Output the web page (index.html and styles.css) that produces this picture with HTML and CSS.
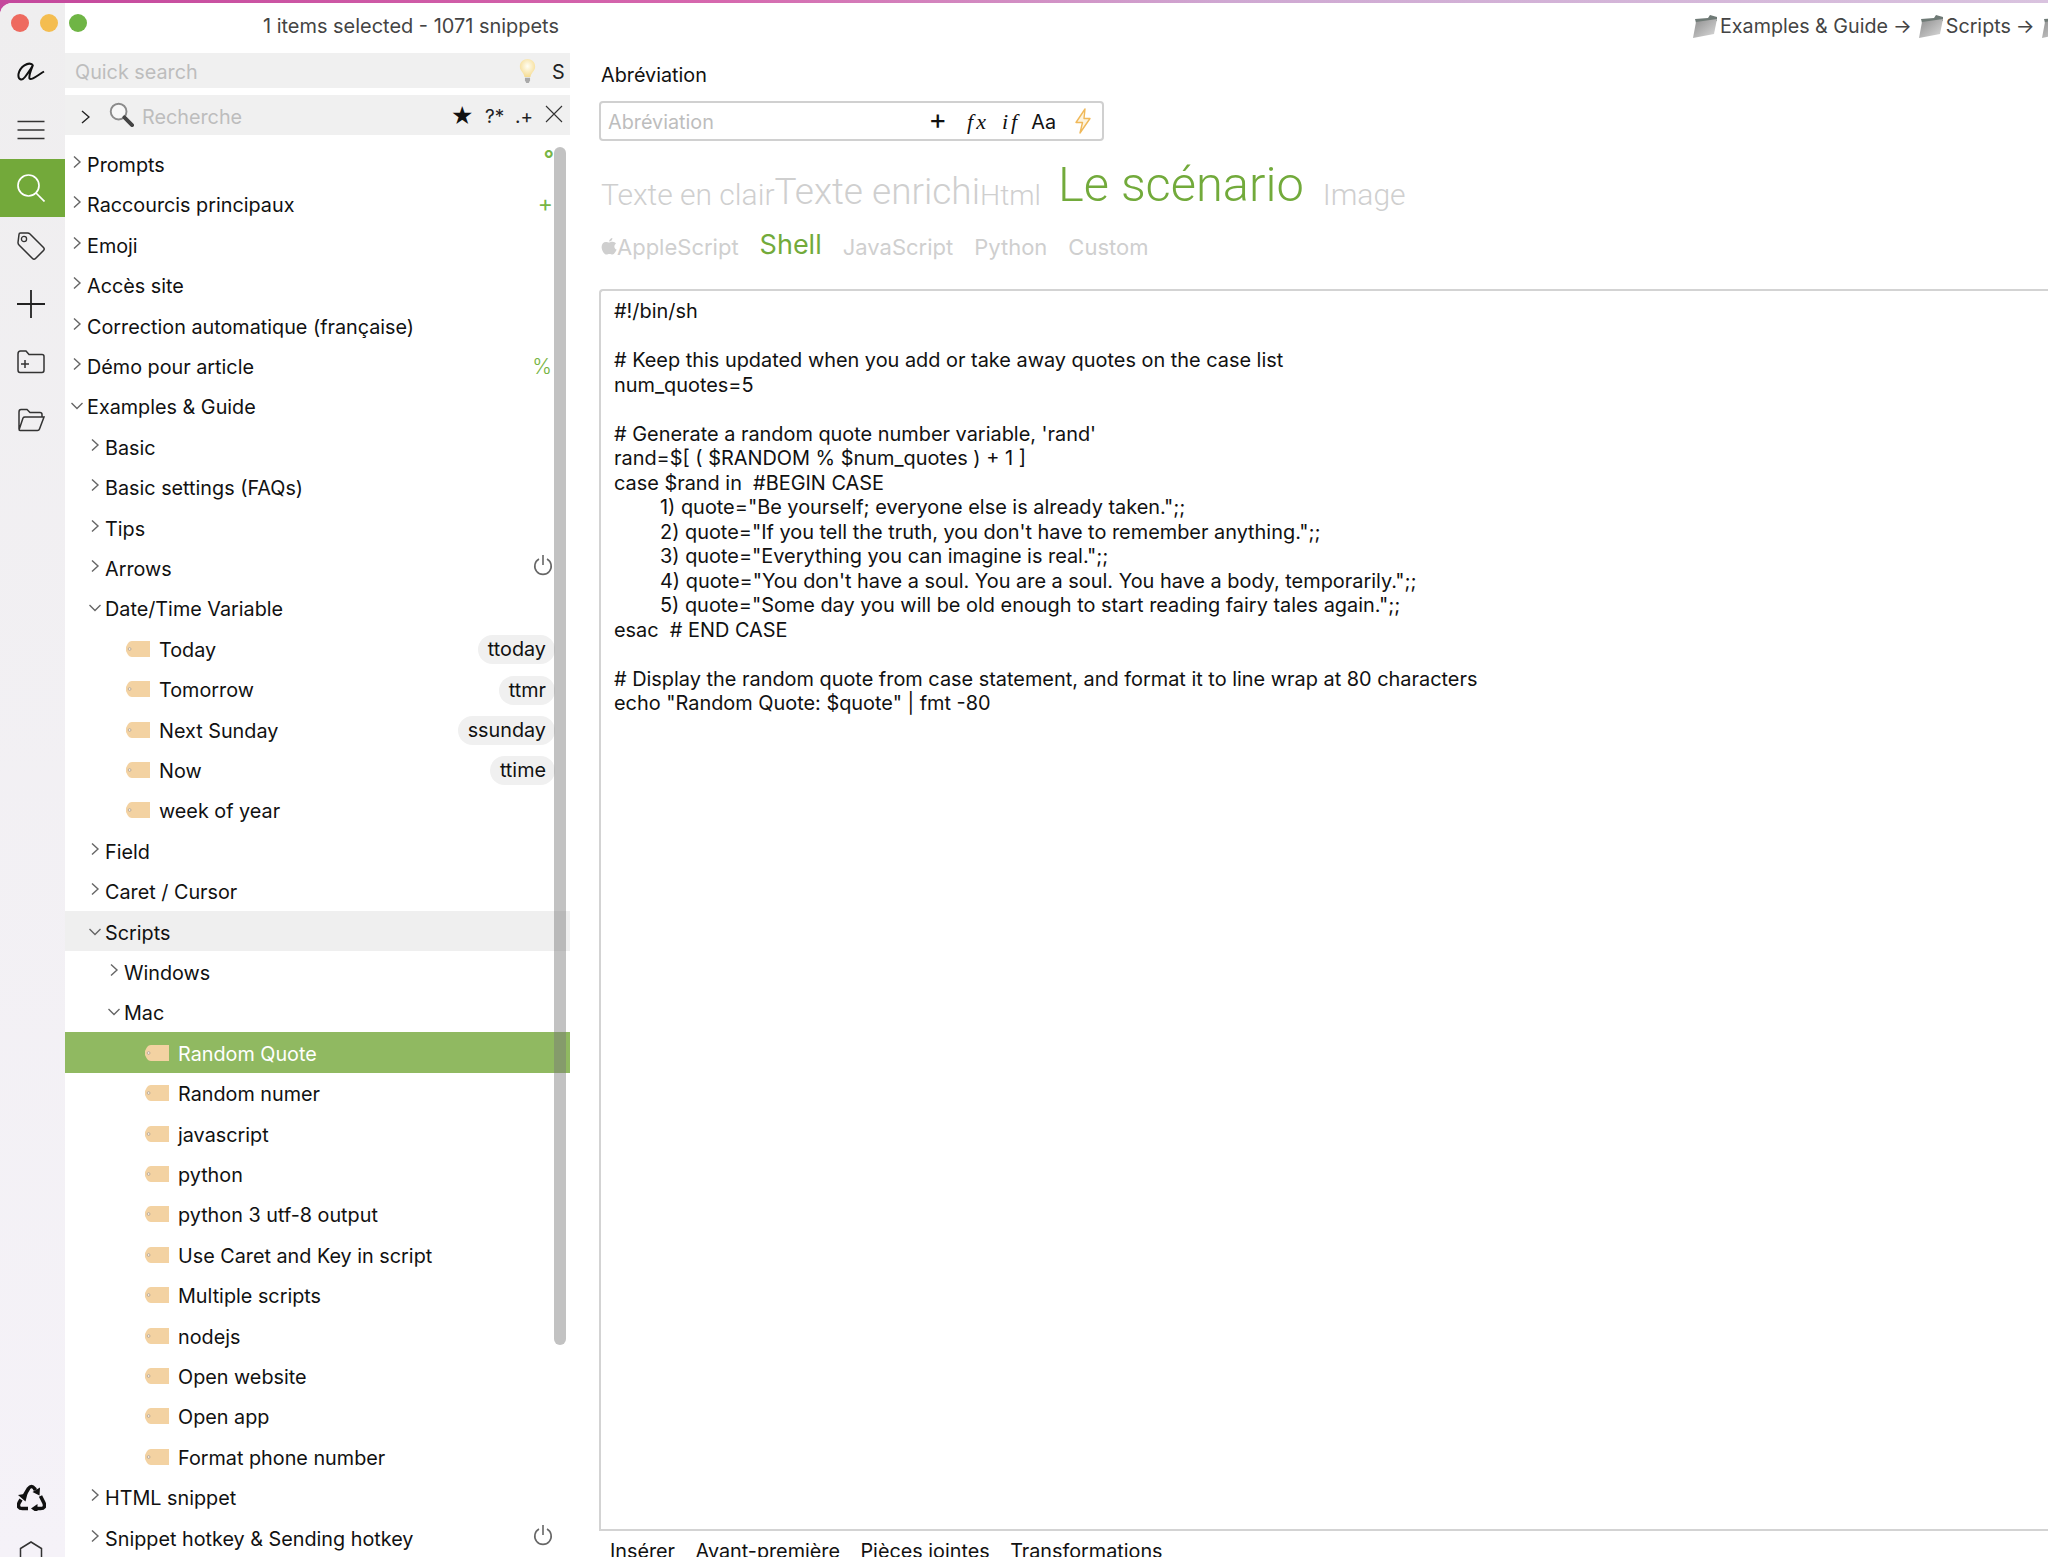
FILE: index.html
```html
<!DOCTYPE html>
<html lang="fr">
<head>
<meta charset="utf-8">
<title>aText</title>
<link rel="stylesheet" href="styles.css">
</head>
<body>
<svg class="defs" width="0" height="0">
  <symbol id="chev-r" viewBox="0 0 12 12"><path d="M3 0.5 L9 6 L3 11.5" fill="none" stroke="#666" stroke-width="1.4"/></symbol>
  <symbol id="chev-d" viewBox="0 0 12 12"><path d="M0.5 3 L6 8.5 L11.5 3" fill="none" stroke="#666" stroke-width="1.4"/></symbol>
  <symbol id="tag" viewBox="0 0 24 16"><path d="M6 0 H24 V16 H6 Q3 16 1.5 13 L0 10 V6 L1.5 3 Q3 0 6 0Z" fill="#f3d2a2"/><circle cx="3.6" cy="8" r="1.4" fill="#f8efe2" stroke="#a89a8a" stroke-width=".7"/></symbol>
  <symbol id="power" viewBox="0 0 20 22"><path d="M6 5 A8.2 8.2 0 1 0 14 5" fill="none" stroke="#666" stroke-width="1.6"/><path d="M10 1 V11" fill="none" stroke="#666" stroke-width="1.6"/></symbol>
  <symbol id="crumb" viewBox="0 0 24 23"><defs><linearGradient id="cg" x1="0" y1="0" x2="1" y2="1"><stop offset="0" stop-color="#8d8d8d"/><stop offset="1" stop-color="#dcdcdc"/></linearGradient></defs><path d="M2 4 L15 3 L17 0 L24 2 L24 6 L3 8 Z" fill="#6f7a76"/><path d="M3 7 L24 4 L21 19 L0 23 Z" fill="url(#cg)"/></symbol>
</svg>
<div class="window">
  <aside class="rail">
    <div class="lights">
      <span class="light red"></span>
      <span class="light amber"></span>
      <span class="light green"></span>
    </div>
    <div class="rail-slot">
      <svg class="ic" viewBox="0 0 28 20"><path d="M16 3 C11 -1 3 5 1.5 12 C0.8 18 5 19 8 15 C11 11 14.5 6 16 3 C14 8 11.5 14 12.5 16.5 C14 19 21 13 27 9.5" fill="none" stroke="#111" stroke-width="2"/></svg>
    </div>
    <div class="rail-slot">
      <svg class="ic" viewBox="0 0 28 20"><path d="M0.5 1.5 H27.5 M0.5 10 H27.5 M0.5 18.5 H27.5" stroke="#333" stroke-width="1.6"/></svg>
    </div>
    <div class="rail-slot active">
      <svg class="ic-lg" viewBox="0 0 28 28"><circle cx="11.5" cy="11.5" r="10.5" fill="none" stroke="#fff" stroke-width="1.7"/><path d="M19 19 L27.5 27.5" stroke="#fff" stroke-width="1.7"/></svg>
    </div>
    <div class="rail-slot">
      <svg class="ic-lg" viewBox="0 0 28 28"><path d="M2 2.5 Q2 1 3.5 1 H10.5 Q12 1 13 2 L26.5 15.5 Q28 17 26.5 18.5 L18.5 26.5 Q17 28 15.5 26.5 L2 13 Q1 12 1 10.5 Z" fill="none" stroke="#333" stroke-width="1.5"/><circle cx="7" cy="7" r="2.6" fill="none" stroke="#333" stroke-width="1.3"/></svg>
    </div>
    <div class="rail-slot">
      <svg class="ic-lg" viewBox="0 0 28 28"><path d="M14 0 V28 M0 14 H28" stroke="#222" stroke-width="1.8"/></svg>
    </div>
    <div class="rail-slot">
      <svg class="ic-lg" viewBox="0 0 28 24"><path d="M1 4 Q1 1 3.5 1 H9 L12 4.5 H25 Q27 4.5 27 6.5 V20 Q27 22.5 25 22.5 H3 Q1 22.5 1 20 Z" fill="none" stroke="#333" stroke-width="1.5"/><path d="M8 10 V18 M4 14 H12" stroke="#333" stroke-width="1.5"/></svg>
    </div>
    <div class="rail-slot">
      <svg class="ic-lg" viewBox="0 0 28 24"><path d="M2 21 V4 Q2 1.5 4 1.5 H10 L13 4.5 H23 Q25 4.5 25 6.5 V9 M2 22 L6 10 Q6.5 9 8 9 H27 L22.5 21 Q22 22.5 20.5 22.5 H3 Q2 22.5 2 21" fill="none" stroke="#333" stroke-width="1.5"/></svg>
    </div>
    <div class="rail-bottom">
      <div class="rail-slot">
        <svg class="ic-recycle" viewBox="0 0 29 27"><path d="M6.5 13 L11.5 4.5 Q14.5 0.5 17.5 4.5 L18.5 6.2 M23.5 12 L27 19 Q29 24.5 23.5 24.5 L20 24.5 M11 24.5 L5.5 24.5 Q0 24.5 2 19 L4 15.5" fill="none" stroke="#111" stroke-width="3.6" stroke-linejoin="round"/><path d="M15.5 8 L22.5 11.5 L23 3.5Z M20.5 20 L14 24.5 L20.5 29Z M1 11 L8.5 17.5 L10.5 9.5Z" fill="#111"/></svg>
      </div>
      <div class="rail-slot">
        <svg class="ic-hex" viewBox="0 0 24 28"><path d="M12 1 L22.5 7.5 V20.5 L12 27 L1.5 20.5 V7.5 Z" fill="none" stroke="#333" stroke-width="1.5"/></svg>
      </div>
    </div>
  </aside>

  <div class="main">
    <header class="titlebar">
      <div class="title">1 items selected - 1071 snippets</div>
      <div class="crumbs">
        <svg class="crumb-ic"><use href="#crumb"/></svg><span>Examples &amp; Guide</span><span class="arrow">→</span>
        <svg class="crumb-ic"><use href="#crumb"/></svg><span>Scripts</span><span class="arrow">→</span>
        <svg class="crumb-ic"><use href="#crumb"/></svg>
      </div>
    </header>

    <div class="content">
      <section class="sidebar">
        <div class="quick">
          <span class="quick-ph">Quick search</span>
          <svg class="bulb" viewBox="0 0 20 30"><defs><radialGradient id="bg" cx=".5" cy=".4" r=".6"><stop offset="0" stop-color="#fffef4"/><stop offset="1" stop-color="#f6dc92"/></radialGradient></defs><path d="M10 1 C4 1 1 5.5 1 10 C1 15 6 17 6.5 22 H13.5 C14 17 19 15 19 10 C19 5.5 16 1 10 1Z" fill="url(#bg)"/><path d="M7 23 H13 V26 L11.5 29 H8.5 L7 26Z" fill="#a9a9a9"/></svg>
          <span class="quick-s">S</span>
        </div>
        <div class="finder">
          <svg class="finder-chev" viewBox="0 0 9 14"><path d="M1 1 L8 7 L1 13" fill="none" stroke="#222" stroke-width="1.4"/></svg>
          <svg class="finder-mag" viewBox="0 0 26 26"><circle cx="10" cy="10" r="8.2" fill="#f7f7f7" stroke="#8b8b8b" stroke-width="2"/><path d="M16 16 L24 24" stroke="#444" stroke-width="4" stroke-linecap="round"/></svg>
          <span class="finder-ph">Recherche</span>
          <span class="finder-star">★</span>
          <span class="finder-op">?*</span>
          <span class="finder-op">.+</span>
          <svg class="finder-x" viewBox="0 0 18 18"><path d="M1 1 L17 17 M17 1 L1 17" stroke="#333" stroke-width="1.1"/></svg>
        </div>

        <div class="tree">
          <div class="thumb"></div>
          <div class="row l0"><svg class="chev r"><use href="#chev-r"/></svg><span class="label">Prompts</span><span class="mark degree">°</span></div>
          <div class="row l0"><svg class="chev r"><use href="#chev-r"/></svg><span class="label">Raccourcis principaux</span><span class="mark plus">+</span></div>
          <div class="row l0"><svg class="chev r"><use href="#chev-r"/></svg><span class="label">Emoji</span></div>
          <div class="row l0"><svg class="chev r"><use href="#chev-r"/></svg><span class="label">Accès site</span></div>
          <div class="row l0"><svg class="chev r"><use href="#chev-r"/></svg><span class="label">Correction automatique (française)</span></div>
          <div class="row l0"><svg class="chev r"><use href="#chev-r"/></svg><span class="label">Démo pour article</span><span class="mark percent">%</span></div>
          <div class="row l0"><svg class="chev d"><use href="#chev-d"/></svg><span class="label">Examples &amp; Guide</span></div>
          <div class="row l1"><svg class="chev r"><use href="#chev-r"/></svg><span class="label">Basic</span></div>
          <div class="row l1"><svg class="chev r"><use href="#chev-r"/></svg><span class="label">Basic settings (FAQs)</span></div>
          <div class="row l1"><svg class="chev r"><use href="#chev-r"/></svg><span class="label">Tips</span></div>
          <div class="row l1"><svg class="chev r"><use href="#chev-r"/></svg><span class="label">Arrows</span><svg class="power"><use href="#power"/></svg></div>
          <div class="row l1"><svg class="chev d"><use href="#chev-d"/></svg><span class="label">Date/Time Variable</span></div>
          <div class="row leaf1"><svg class="tag"><use href="#tag"/></svg><span class="label">Today</span><span class="pill">ttoday</span></div>
          <div class="row leaf1"><svg class="tag"><use href="#tag"/></svg><span class="label">Tomorrow</span><span class="pill">ttmr</span></div>
          <div class="row leaf1"><svg class="tag"><use href="#tag"/></svg><span class="label">Next Sunday</span><span class="pill">ssunday</span></div>
          <div class="row leaf1"><svg class="tag"><use href="#tag"/></svg><span class="label">Now</span><span class="pill">ttime</span></div>
          <div class="row leaf1"><svg class="tag"><use href="#tag"/></svg><span class="label">week of year</span></div>
          <div class="row l1"><svg class="chev r"><use href="#chev-r"/></svg><span class="label">Field</span></div>
          <div class="row l1"><svg class="chev r"><use href="#chev-r"/></svg><span class="label">Caret / Cursor</span></div>
          <div class="row l1 parent"><svg class="chev d"><use href="#chev-d"/></svg><span class="label">Scripts</span></div>
          <div class="row l2"><svg class="chev r"><use href="#chev-r"/></svg><span class="label">Windows</span></div>
          <div class="row l2"><svg class="chev d"><use href="#chev-d"/></svg><span class="label">Mac</span></div>
          <div class="row leaf2 selected"><svg class="tag"><use href="#tag"/></svg><span class="label">Random Quote</span></div>
          <div class="row leaf2"><svg class="tag"><use href="#tag"/></svg><span class="label">Random numer</span></div>
          <div class="row leaf2"><svg class="tag"><use href="#tag"/></svg><span class="label">javascript</span></div>
          <div class="row leaf2"><svg class="tag"><use href="#tag"/></svg><span class="label">python</span></div>
          <div class="row leaf2"><svg class="tag"><use href="#tag"/></svg><span class="label">python 3 utf-8 output</span></div>
          <div class="row leaf2"><svg class="tag"><use href="#tag"/></svg><span class="label">Use Caret and Key in script</span></div>
          <div class="row leaf2"><svg class="tag"><use href="#tag"/></svg><span class="label">Multiple scripts</span></div>
          <div class="row leaf2"><svg class="tag"><use href="#tag"/></svg><span class="label">nodejs</span></div>
          <div class="row leaf2"><svg class="tag"><use href="#tag"/></svg><span class="label">Open website</span></div>
          <div class="row leaf2"><svg class="tag"><use href="#tag"/></svg><span class="label">Open app</span></div>
          <div class="row leaf2"><svg class="tag"><use href="#tag"/></svg><span class="label">Format phone number</span></div>
          <div class="row l1"><svg class="chev r"><use href="#chev-r"/></svg><span class="label">HTML snippet</span></div>
          <div class="row l1"><svg class="chev r"><use href="#chev-r"/></svg><span class="label">Snippet hotkey &amp; Sending hotkey</span><svg class="power"><use href="#power"/></svg></div>
        </div>
      </section>

      <section class="detail">
        <div class="abbr-label">Abréviation</div>
        <div class="abbr-field">
          <span class="abbr-ph">Abréviation</span>
          <span class="abbr-plus">+</span>
          <span class="abbr-fx">fx</span>
          <span class="abbr-if">if</span>
          <span class="abbr-aa">Aa</span>
          <svg class="bolt" viewBox="0 0 18 26"><path d="M11 1 L2 14.5 H8.5 L6 25 L16 10.5 H10 Z" fill="#fdf3dd" stroke="#f0b95a" stroke-width="1.4" stroke-linejoin="round"/></svg>
        </div>
        <div class="kinds">
          <span class="kind k-plain">Texte en clair</span>
          <span class="kind k-rich">Texte enrichi</span>
          <span class="kind k-html">Html</span>
          <span class="kind k-script">Le scénario</span>
          <span class="kind k-image">Image</span>
        </div>
        <div class="langs">
          <span class="lang lang-apple"><svg class="apple" viewBox="0 0 16 20"><path d="M11.4 1 C11.5 2.8 10 4.6 8.2 4.5 C8 2.8 9.7 1.1 11.4 1Z M8.3 5.5 C9.2 5.5 10.2 4.8 11.6 4.8 C13 4.8 14.2 5.5 15 6.7 C12.6 8 13 11.6 15.6 12.6 C15 14.2 13.3 17.6 11.5 17.6 C10.4 17.6 9.8 16.9 8.5 16.9 C7.2 16.9 6.5 17.6 5.5 17.6 C3.5 17.6 0.6 13.6 0.6 10 C0.6 6.8 2.7 4.9 4.8 4.9 C6.2 4.9 7.4 5.5 8.3 5.5Z" fill="#cfcfcf"/></svg>AppleScript</span>
          <span class="lang lang-on">Shell</span>
          <span class="lang">JavaScript</span>
          <span class="lang">Python</span>
          <span class="lang">Custom</span>
        </div>
        <pre class="editor">#!/bin/sh

# Keep this updated when you add or take away quotes on the case list
num_quotes=5

# Generate a random quote number variable, 'rand'
rand=$[ ( $RANDOM % $num_quotes ) + 1 ]
case $rand in  #BEGIN CASE
&#9;1) quote="Be yourself; everyone else is already taken.";;
&#9;2) quote="If you tell the truth, you don't have to remember anything.";;
&#9;3) quote="Everything you can imagine is real.";;
&#9;4) quote="You don't have a soul. You are a soul. You have a body, temporarily.";;
&#9;5) quote="Some day you will be old enough to start reading fairy tales again.";;
esac  # END CASE

# Display the random quote from case statement, and format it to line wrap at 80 characters
echo "Random Quote: $quote" | fmt -80</pre>
        <nav class="bottom-tabs">
          <span>Insérer</span>
          <span>Avant-première</span>
          <span>Pièces jointes</span>
          <span>Transformations</span>
        </nav>
      </section>
    </div>
  </div>
</div>
</body>
</html>
```
FILE: styles.css
```css
* { box-sizing: border-box; }
html, body { margin: 0; height: 100%; }
body {
  height: 1557px;
  overflow: hidden;
  padding-top: 3px;
  background: linear-gradient(90deg, #c4489c 0%, #d668ae 35%, #cfa8d2 60%, #d9c3df 100%);
  font-family: Inter, "Liberation Sans", sans-serif;
  font-size: 19.8px;
  color: #111;
}
.defs { position: absolute; }

.window {
  display: flex;
  height: 1554px;
  background: #fff;
  border-top-left-radius: 12px;
  overflow: hidden;
}

/* Left rail */
.rail {
  width: 65px;
  flex: none;
  display: flex;
  flex-direction: column;
  background: linear-gradient(180deg, #efeeef 0%, #f5f2f8 100%);
}
.lights {
  height: 40px;
  width: 65px;
  flex: none;
  display: flex;
  gap: 11px;
  padding: 11px 0 0 11px;
}
.light { width: 18px; height: 18px; border-radius: 50%; flex: none; }
.light.red { background: #ee6a5f; }
.light.amber { background: #f4bd50; }
.light.green { background: #6fb545; }
.rail-slot {
  height: 58px;
  display: flex;
  align-items: center;
  justify-content: center;
  padding-right: 3px;
}
.rail-slot.active { background: #73a93a; }
.ic { width: 28px; height: 20px; }
.ic-lg { width: 28px; height: 28px; }
.ic-hex { width: 24px; height: 28px; }
.ic-recycle { width: 29px; height: 27px; }
.rail-bottom { margin-top: auto; margin-bottom: -27px; }

/* Main */
.main { flex: 1; min-width: 0; display: flex; flex-direction: column; }
.titlebar {
  height: 50px;
  flex: none;
  display: flex;
  align-items: flex-start;
  padding-top: 11px;
  color: #444;
  line-height: 24px;
}
.title { margin-left: 198px; font-size: 19.95px; }
.crumbs {
  margin-left: auto;
  display: flex;
  align-items: center;
  gap: 3px;
  white-space: nowrap;
  width: 355px;
  overflow: hidden;
  flex: none;
  font-size: 19.7px;
}
.crumb-ic { width: 24px; height: 23px; flex: none; }
.arrow { margin: 0 4px 0 2px; }

.content { flex: 1; display: flex; min-height: 0; }

/* Sidebar */
.sidebar { width: 505px; flex: none; display: flex; flex-direction: column; }
.quick {
  height: 35px;
  background: #f0f0f0;
  display: flex;
  align-items: center;
  padding: 2px 3px 0 10px;
  flex: none;
}
.quick-ph { color: #bdbdbd; flex: 1; }
.bulb { width: 17px; height: 26px; margin-right: 16px; position: relative; top: -1px; }
.quick-s { color: #222; width: 15px; }
.finder {
  height: 40px;
  margin-top: 7px;
  background: #f0f0f0;
  display: flex;
  align-items: center;
  flex: none;
  padding: 3px 0 0 16px;
}
.finder-chev { width: 9px; height: 14px; margin-right: 19px; }
.finder-mag { width: 25px; height: 25px; margin-right: 8px; position: relative; top: -2px; }
.finder-ph { color: #bdbdbd; flex: 1; }
.finder-star { font-family: "DejaVu Sans", sans-serif; font-size: 25px; line-height: 1; color: #111; width: 34px; margin-left: -2px; position: relative; top: -1px; }
.finder-op { width: 30px; font-size: 19px; color: #222; }
.finder-x { width: 18px; height: 18px; margin-right: 7px; position: relative; top: -3px; }

.tree { position: relative; flex: 1; min-height: 0; padding-top: 8.2px; }
.thumb {
  position: absolute;
  top: 12px;
  right: 4px;
  width: 12px;
  height: 1198px;
  border-radius: 6px;
  background: rgba(120, 120, 120, .45);
  z-index: 2;
}
.row {
  height: 40.42px;
  display: flex;
  align-items: center;
  padding-top: 3px;
  white-space: nowrap;
}
.chev { width: 12px; height: 12px; flex: none; margin-right: 4px; position: relative; top: -3px; }
.chev.d { top: -1px; }
.l0 { padding-left: 6px; }
.l1 { padding-left: 24px; }
.l2 { padding-left: 43px; }
.tag { width: 24px; height: 16px; flex: none; margin-right: 9px; position: relative; top: -1px; }
.leaf1 { padding-left: 61px; }
.leaf2 { padding-left: 80px; }
.label { flex: 1; }
.parent { background: #efefef; }
.selected { background: #90b961; color: #fff; }

.mark { color: #77b544; }
.degree { font-size: 23px; position: relative; top: -6px; margin-right: 16px; font-weight: 600; }
.plus { font-size: 23px; position: relative; top: -1px; margin-right: 17px; font-weight: 400; }
.percent { font-size: 21px; margin-right: 18px; font-weight: 300; }
.power { width: 20px; height: 22px; margin-right: 17px; position: relative; top: -4px; }
.pill {
  height: 29px;
  line-height: 29px;
  padding: 0 9px 0 10px;
  border-radius: 15px;
  background: #f0f0f0;
  margin-right: 15px;
}

/* Detail */
.detail {
  flex: 1;
  min-width: 0;
  margin-left: 29px;
  display: flex;
  flex-direction: column;
}
.abbr-label { height: 48px; padding: 10px 0 0 2px; line-height: 24px; }
.abbr-field {
  width: 505px;
  height: 40px;
  border: 2px solid #d0d0d0;
  border-radius: 4px;
  display: flex;
  align-items: center;
  padding: 2px 10px 0 7px;
}
.abbr-ph { color: #bdbdbd; flex: 1; }
.abbr-plus { font-size: 28px; font-weight: 400; margin-right: 20px; position: relative; top: -3px; }
.abbr-fx, .abbr-if {
  font-family: "Liberation Serif", serif;
  font-style: italic;
  font-size: 22px;
  letter-spacing: 3px;
}
.abbr-fx { margin-right: 13px; }
.abbr-if { margin-right: 11px; }
.abbr-aa { margin-right: 18px; }
.bolt { width: 18px; height: 26px; position: relative; top: -1px; }

.kinds {
  display: flex;
  align-items: baseline;
  height: 86px;
  padding: 19px 0 0 2px;
  font-family: Roboto, sans-serif;
  font-weight: 300;
  color: #cfcfcf;
  white-space: nowrap;
}
.k-plain { font-size: 30px; }
.k-rich { font-size: 37px; position: relative; top: -1px; }
.k-html { font-size: 28.5px; }
.k-script { font-size: 48.8px; color: #72aa3b; margin-left: 17px; position: relative; top: -4px; }
.k-image { font-size: 30px; margin-left: 19px; }

.langs {
  display: flex;
  align-items: center;
  gap: 21px;
  height: 62px;
  padding: 0 0 22px 2px;
  font-size: 22px;
  color: #cfcfcf;
}
.lang { display: flex; align-items: center; }
.apple { width: 16px; height: 20px; }
.lang-on { color: #72aa3b; font-size: 27px; font-weight: 400; position: relative; top: -3px; }

.editor {
  flex: 1;
  min-height: 0;
  margin: 0;
  padding: 8px 0 0 13px;
  border: 2px solid #d3d3d3;
  border-right: 0;
  border-top-left-radius: 4px;
  font-family: inherit;
  font-size: 19.9px;
  line-height: 24.5px;
  tab-size: 46px;
  color: #111;
}
.bottom-tabs {
  flex: none;
  height: 26px;
  display: flex;
  gap: 20.5px;
  padding: 8px 0 0 11px;
  line-height: 24px;
  white-space: nowrap;
}
```
